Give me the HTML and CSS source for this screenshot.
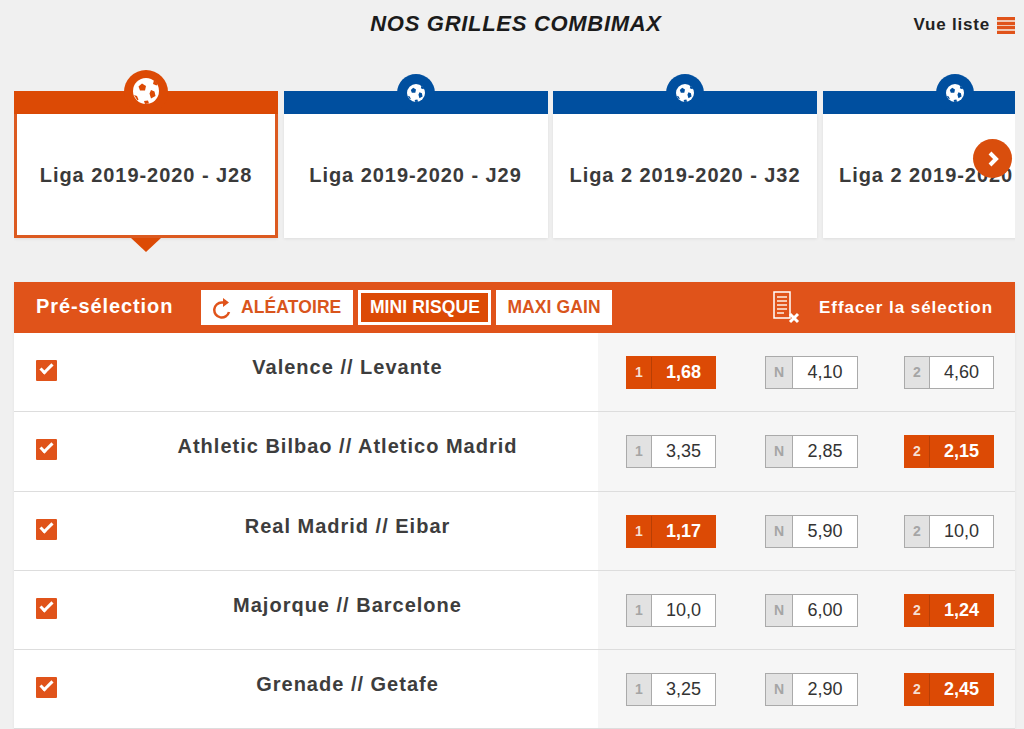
FILE: index.html
```html
<!DOCTYPE html>
<html lang="fr">
  <head>
    <meta charset="utf-8">
    <title>Nos grilles Combimax</title>
    <link rel="stylesheet" href="styles.css">
  </head>
  <body>
    <svg class="sprites" width="0" height="0">
      <symbol id="ball" viewBox="0 0 26 26">
        <circle cx="13" cy="13" r="13" fill="#fff"/>
        <path class="patch" d="M9 5.500l4 2.500-1 4.500H7L5.500 8.500z"/>
        <path class="patch" d="M18 12l3.500 1.500 1 4.500-4.500 2.500-1.500-5zM21 2l3.500 4-1 1.500-3.500-1.500zM1 17l3 1 1.500 3.500-1 1zM11 23l4-.5 1 3-4 .5z"/>
      </symbol>
    </svg>

    <div class="top-bar">
      <h1 class="page-title">NOS GRILLES COMBIMAX</h1>
      <a class="list-link">Vue liste <span class="list-icon"></span></a>
    </div>

    <div class="carousel">
      <div class="grid-tab active">
        <span class="tab-badge"><svg class="ball"><use href="#ball"/></svg></span>
        <div class="tab-head"></div>
        <div class="tab-body">Liga 2019-2020 - J28</div>
      </div>
      <div class="grid-tab">
        <span class="tab-badge"><svg class="ball"><use href="#ball"/></svg></span>
        <div class="tab-head"></div>
        <div class="tab-body">Liga 2019-2020 - J29</div>
      </div>
      <div class="grid-tab">
        <span class="tab-badge"><svg class="ball"><use href="#ball"/></svg></span>
        <div class="tab-head"></div>
        <div class="tab-body">Liga 2 2019-2020 - J32</div>
      </div>
      <div class="grid-tab">
        <span class="tab-badge"><svg class="ball"><use href="#ball"/></svg></span>
        <div class="tab-head"></div>
        <div class="tab-body">Liga 2 2019-2020 - J33</div>
      </div>
      <a class="next-btn">
        <svg width="14" height="18" viewBox="0 0 14 18"><path d="M4 3l6 6-6 6" fill="none" stroke="#fff" stroke-width="4"/></svg>
      </a>
    </div>

    <div class="selection">
      <div class="selection-head">
        <span class="head-label">Pré-sélection</span>
        <div class="mode-btns">
          <a class="mode-btn">
            <svg width="18" height="22" viewBox="0 0 18 22"><path d="M16 15A7.500 7.500 0 1 1 9 5.500H11" fill="none" stroke="#e0531a" stroke-width="2.500"/><path d="M10 1l6 4.500-6 4.500z" fill="#e0531a"/></svg>
            ALÉATOIRE
          </a>
          <a class="mode-btn current">MINI RISQUE</a>
          <a class="mode-btn">MAXI GAIN</a>
        </div>
        <a class="clear-link">
          <svg width="27" height="33" viewBox="0 0 27 33">
            <path d="M1 1h16v26H1z" fill="none" stroke="#fff" stroke-width="1.500"/>
            <path d="M4 6h10M4 10h10M4 14h10M4 18h10M4 22h7" stroke="#f6c9b2" stroke-width="2"/>
            <path d="M17 23l8 8M25 23l-8 8" stroke="#fff" stroke-width="3"/>
          </svg>
          Effacer la sélection
        </a>
      </div>

      <div class="match-row">
        <div class="match-info"><span class="check"></span><span class="match-name">Valence // Levante</span></div>
        <div class="odds">
          <a class="odd on"><i>1</i><b>1,68</b></a>
          <a class="odd wide"><i>N</i><b>4,10</b></a>
          <a class="odd"><i>2</i><b>4,60</b></a>
        </div>
      </div>
      <div class="match-row">
        <div class="match-info"><span class="check"></span><span class="match-name">Athletic Bilbao // Atletico Madrid</span></div>
        <div class="odds">
          <a class="odd"><i>1</i><b>3,35</b></a>
          <a class="odd wide"><i>N</i><b>2,85</b></a>
          <a class="odd on"><i>2</i><b>2,15</b></a>
        </div>
      </div>
      <div class="match-row">
        <div class="match-info"><span class="check"></span><span class="match-name">Real Madrid // Eibar</span></div>
        <div class="odds">
          <a class="odd on"><i>1</i><b>1,17</b></a>
          <a class="odd wide"><i>N</i><b>5,90</b></a>
          <a class="odd"><i>2</i><b>10,0</b></a>
        </div>
      </div>
      <div class="match-row">
        <div class="match-info"><span class="check"></span><span class="match-name">Majorque // Barcelone</span></div>
        <div class="odds">
          <a class="odd"><i>1</i><b>10,0</b></a>
          <a class="odd wide"><i>N</i><b>6,00</b></a>
          <a class="odd on"><i>2</i><b>1,24</b></a>
        </div>
      </div>
      <div class="match-row">
        <div class="match-info"><span class="check"></span><span class="match-name">Grenade // Getafe</span></div>
        <div class="odds">
          <a class="odd"><i>1</i><b>3,25</b></a>
          <a class="odd wide"><i>N</i><b>2,90</b></a>
          <a class="odd on"><i>2</i><b>2,45</b></a>
        </div>
      </div>
    </div>
  </body>
</html>
```

FILE: styles.css
```css
html, body {
  height: 729px;
  overflow: hidden;
}

body {
  margin: 0;
  padding: 0 9px 0 14px;
  background: #f0f0f0;
  color: #333;
  font-family: "Liberation Sans", Arial, sans-serif;
}

.sprites {
  display: block;
  height: 0;
}

/* Title bar */
.top-bar {
  position: relative;
  height: 70px;
  display: flex;
  justify-content: center;
}

.page-title {
  margin: 11px 0 0;
  padding-left: 3px;
  font-size: 22px;
  line-height: 26px;
  font-style: italic;
  font-weight: bold;
  letter-spacing: 0.700px;
  color: #1b1b1b;
}

.list-link {
  position: absolute;
  right: 0;
  top: 15px;
  display: flex;
  align-items: center;
  gap: 7px;
  font-size: 17px;
  line-height: 20px;
  font-weight: bold;
  letter-spacing: 0.800px;
  color: #222;
}

.list-icon {
  width: 18px;
  height: 17px;
  background: repeating-linear-gradient(to bottom, #e0531a 0, #e0531a 3px, #f0c8b4 3px, #f0c8b4 4.600px);
}

/* Grid tabs */
.carousel {
  position: relative;
  display: flex;
  gap: 5.500px;
  height: 190px;
  overflow: hidden;
}

.grid-tab {
  position: relative;
  flex: 0 0 264px;
  margin-top: 21px;
  height: 147px;
}

.tab-head {
  height: 23px;
  background: #004f9f;
}

.tab-body {
  height: 124px;
  display: flex;
  align-items: center;
  justify-content: center;
  padding-bottom: 2px;
  box-sizing: border-box;
  background: #fff;
  font-size: 20px;
  font-weight: bold;
  letter-spacing: 0.950px;
  color: #3a3a3a;
  white-space: nowrap;
  box-shadow: 0 1px 3px rgba(0, 0, 0, 0.08);
}

.tab-badge {
  position: absolute;
  left: 50%;
  top: -17px;
  width: 38px;
  height: 38px;
  margin-left: -19px;
  border-radius: 50%;
  background: #004f9f;
  display: flex;
  align-items: center;
  justify-content: center;
}

.ball {
  width: 18px;
  height: 18px;
  fill: #004f9f;
}

.patch {
  fill: inherit;
}

.grid-tab.active .tab-head {
  background: #dc4a05;
}

.grid-tab.active .tab-body {
  padding: 1px 0 0;
  border: 3px solid #dc5a20;
  border-top: 0;
}

.grid-tab.active .tab-badge {
  top: -21px;
  width: 44px;
  height: 44px;
  margin-left: -22px;
  padding-bottom: 2px;
  box-sizing: border-box;
  background: #dc4a05;
}

.grid-tab.active .ball {
  width: 26px;
  height: 26px;
  fill: #dc4a05;
}

/* little arrow under the active tab */
.grid-tab.active::after {
  content: "";
  position: absolute;
  left: 50%;
  top: 147px;
  margin-left: -15px;
  border-style: solid;
  border-width: 14px 15px 0;
  border-color: #dc4a05 transparent transparent;
}

.next-btn {
  position: absolute;
  right: 3px;
  top: 69px;
  width: 39px;
  height: 39px;
  border-radius: 50%;
  background: #d94e0d;
  display: flex;
  align-items: center;
  justify-content: center;
}

/* Selection table */
.selection {
  margin-top: 22px;
  box-shadow: 0 1px 3px rgba(0, 0, 0, 0.06);
}

.selection-head {
  height: 51px;
  display: flex;
  align-items: center;
  padding: 0 22px;
  background: #e0531a;
  color: #fff;
  font-weight: bold;
}

.head-label {
  width: 165px;
  font-size: 20px;
  letter-spacing: 0.900px;
  margin-top: -3px;
}

.mode-btns {
  display: flex;
  gap: 5px;
}

.mode-btn {
  height: 35px;
  box-sizing: border-box;
  display: flex;
  align-items: center;
  justify-content: center;
  gap: 10px;
  padding: 0 12px;
  background: #fff;
  color: #d9551c;
  font-size: 17.500px;
  letter-spacing: 0.100px;
  font-weight: bold;
}

.mode-btn:last-child {
  padding: 0 11px;
}

.mode-btn.current {
  background: #dc4a05;
  color: #fff;
  border: 3px solid #fff;
  padding: 0 8.500px;
}

.clear-link {
  margin-left: auto;
  display: flex;
  align-items: center;
  gap: 19px;
  font-size: 17px;
  letter-spacing: 0.950px;
}

.match-row {
  height: 78.250px;
  display: flex;
  background: #fff;
  border-bottom: 1px solid #ddd;
}

.match-info {
  width: 584px;
  display: flex;
  padding-left: 22px;
  box-sizing: border-box;
}

.check {
  position: relative;
  flex: none;
  width: 21px;
  height: 21px;
  margin-top: 27px;
  background: #e0531a;
  border-radius: 1px;
}

.check::after {
  content: "";
  position: absolute;
  left: 4px;
  top: 4px;
  width: 13px;
  height: 7px;
  border-left: 3px solid #fff;
  border-bottom: 3px solid #fff;
  box-sizing: border-box;
  transform: rotate(-45deg);
}

.match-name {
  flex: 1;
  margin-top: 23px;
  padding-left: 40px;
  text-align: center;
  font-size: 20px;
  line-height: 22px;
  font-weight: bold;
  letter-spacing: 1px;
  color: #3d3d3d;
}

.odds {
  flex: 1;
  display: flex;
  align-items: flex-start;
  padding: 23px 0 0 28px;
  background: #f6f6f6;
}

.odd {
  width: 90px;
  height: 33px;
  box-sizing: border-box;
  display: flex;
  background: #fff;
  border: 1px solid #aaa;
  font-size: 18px;
  line-height: 31px;
  text-align: center;
  color: #333;
}

.odd.wide {
  width: 93px;
  margin: 0 46px 0 49px;
}

.odd i {
  flex: none;
  width: 24px;
  background: #e2e2e2;
  border-right: 1px solid #aaa;
  color: #a5a5a5;
  font-style: normal;
  font-weight: bold;
  font-size: 14px;
}

.odd.wide i {
  width: 26px;
}

.odd b {
  flex: 1;
  font-weight: normal;
}

.odd.on {
  background: #dc4a05;
  border-color: #dc4a05;
  color: #fff;
}

.odd.on i {
  background: #dc4a05;
  border-right-color: #b83f05;
  color: #f6dfd2;
}

.odd.on b {
  font-weight: bold;
}
```
